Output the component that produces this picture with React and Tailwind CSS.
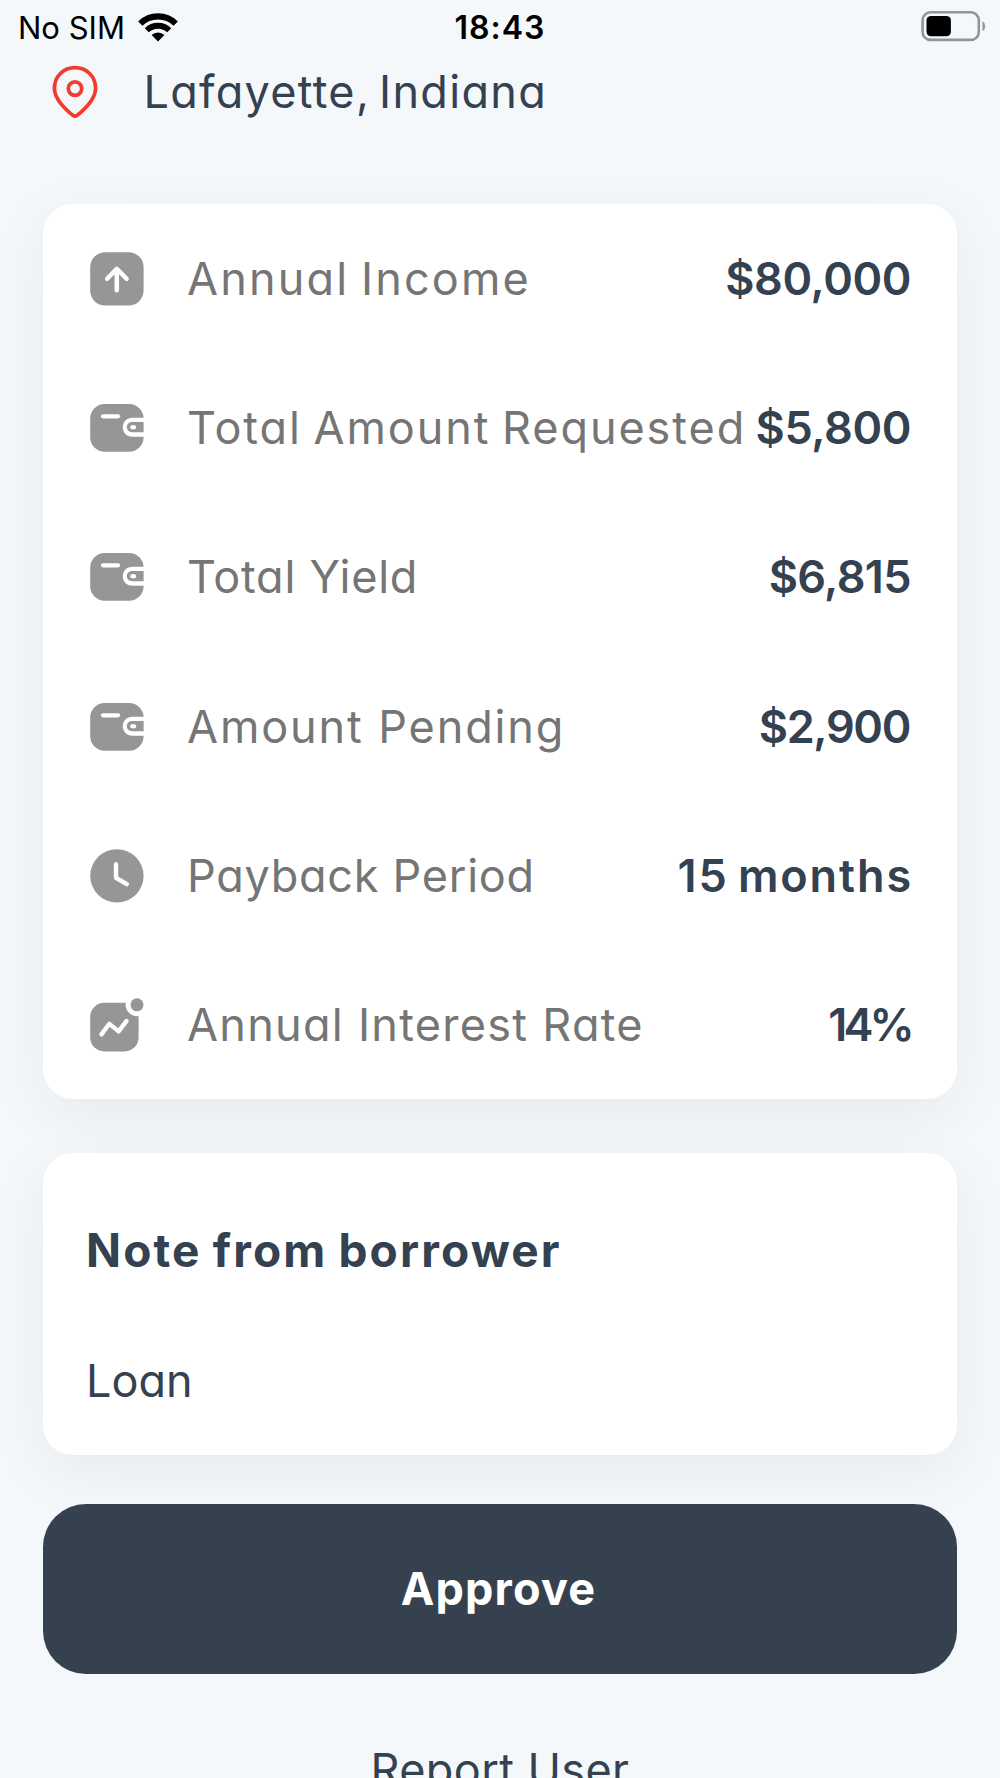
import clsx from 'clsx';

function PinIcon() {
  return (
    <svg width="46" height="54" viewBox="0 0 46 54" fill="none" stroke="#f4392f" strokeWidth="3.7">
      <path
        d="M23 51.2C21.5 51.2 19.6 49.4 17.8 47.8C9.6 40.6 2.4 32.8 2.4 23.2C2.4 11.4 11.6 2.7 23 2.7S43.6 11.4 43.6 23.2C43.6 32.8 36.4 40.6 28.2 47.8C26.4 49.4 24.5 51.2 23 51.2Z"
        strokeLinejoin="round"
      />
      <circle cx="23" cy="23.6" r="6.7" />
    </svg>
  );
}

function WifiIcon() {
  return (
    <svg width="40" height="30" viewBox="0 0 40 30" fill="none" stroke="#000">
      <path d="M2.3 11.6A25.3 25.3 0 0 1 37.7 11.6" strokeWidth="6.2" />
      <path d="M8.8 18.3A16 16 0 0 1 31.2 18.3" strokeWidth="5.8" />
      <path d="M20 29.4L13.6 23A9.4 9.4 0 0 1 26.4 23Z" fill="#000" stroke="none" />
    </svg>
  );
}

function BatteryIcon() {
  return (
    <svg width="66" height="32" viewBox="0 0 66 32">
      <rect x="2.6" y="2.3" width="56.2" height="27.6" rx="8" fill="none" stroke="#929496" strokeWidth="2.6" />
      <rect x="6.5" y="6" width="24.4" height="20.2" rx="4.5" fill="#000" />
      <path d="M62.5 11.2C66 13 66 19.4 62.5 21.2Z" fill="#929496" />
    </svg>
  );
}

function IncomeIcon() {
  return (
    <svg width="54" height="54" viewBox="0 0 54 54" fill="none">
      <rect x="0.2" y="0.2" width="53.4" height="53.4" rx="15" fill="#969696" />
      <path
        d="M26.8 38.2V17M17.2 26.8L26.8 16.8L36.6 26.8"
        stroke="#fff"
        strokeWidth="4.5"
        strokeLinecap="round"
        strokeLinejoin="round"
      />
    </svg>
  );
}

function WalletIcon() {
  return (
    <svg width="54" height="48" viewBox="0 0 54 48" fill="none">
      <rect x="0.2" y="0" width="53.4" height="47.8" rx="14.5" fill="#969696" />
      <path d="M13 12.3H28" stroke="#fff" strokeWidth="4.2" strokeLinecap="round" />
      <path d="M54 13.8H42.4C36.8 13.8 32.8 17.8 32.8 23.2S36.8 32.7 42.4 32.7H54Z" fill="#fff" />
      <path d="M53.6 18H42.4C39 18 36.8 20.2 36.8 23.1S39 28.2 42.4 28.2H53.6Z" fill="#969696" />
      <ellipse cx="43.2" cy="23.2" rx="2.9" ry="2.2" fill="#fff" />
    </svg>
  );
}

function ClockIcon() {
  return (
    <svg width="54" height="54" viewBox="0 0 54 54" fill="none">
      <circle cx="26.9" cy="26.9" r="26.7" fill="#969696" />
      <path d="M26 15.2V28.8L36.8 35.2" stroke="#fff" strokeWidth="4.4" strokeLinecap="round" strokeLinejoin="round" />
    </svg>
  );
}

function RateIcon() {
  return (
    <svg width="54" height="54" viewBox="0 0 54 54" fill="none">
      <rect x="0.2" y="4.8" width="48.4" height="48.6" rx="14" fill="#969696" />
      <circle cx="47" cy="6.8" r="11.4" fill="#fff" />
      <circle cx="47" cy="6.8" r="6.5" fill="#969696" />
      <path
        d="M11.4 36.4L19.4 25.8L28.6 33.4L36.6 22.9"
        stroke="#fff"
        strokeWidth="4.3"
        strokeLinecap="round"
        strokeLinejoin="round"
      />
    </svg>
  );
}

const details = [
  {
    label: 'Annual Income',
    value: '$80,000',
    icon: IncomeIcon,
    labelClass: 'tracking-[2.15px] [word-spacing:-3px]',
    valueClass: 'tracking-[-0.4px]',
  },
  {
    label: 'Total Amount Requested',
    value: '$5,800',
    icon: WalletIcon,
    labelClass: 'tracking-[1.93px] [word-spacing:-3px]',
    valueClass: 'tracking-[-0.4px]',
  },
  {
    label: 'Total Yield',
    value: '$6,815',
    icon: WalletIcon,
    labelClass: 'tracking-[0.76px]',
    valueClass: 'tracking-[-0.6px]',
  },
  {
    label: 'Amount Pending',
    value: '$2,900',
    icon: WalletIcon,
    labelClass: 'tracking-[1.88px]',
    valueClass: 'mr-px tracking-[-1.35px]',
  },
  {
    label: 'Payback Period',
    value: '15 months',
    icon: ClockIcon,
    labelClass: 'tracking-[0.73px]',
    valueClass: '-mr-[2px] tracking-[1.9px] [word-spacing:-4px]',
  },
  {
    label: 'Annual Interest Rate',
    value: '14%',
    icon: RateIcon,
    labelClass: 'tracking-[1.29px]',
    valueClass: 'tracking-[-3.8px]',
  },
];

function DetailRow({ item }) {
  const Icon = item.icon;

  return (
    <div className="flex items-center">
      <div className="w-[97px] shrink-0 pt-px">
        <Icon />
      </div>
      <span className={clsx('text-[45px] text-[#757575]', item.labelClass)}>{item.label}</span>
      <span className={clsx('ml-auto text-[45px] font-semibold', item.valueClass)}>{item.value}</span>
    </div>
  );
}

function App() {
  return (
    <div className="flex h-[1778px] w-[1000px] flex-col overflow-hidden bg-[#f4f8fb] font-['Inter',sans-serif] leading-none whitespace-nowrap text-[#334150] [font-feature-settings:'cv11']">
      <header className="grid h-[54px] shrink-0 grid-cols-3 items-center px-[18px] text-black [font-feature-settings:normal]">
        <div className="flex items-center gap-[13px]">
          <span className="pt-px text-[31px]">No SIM</span>
          <WifiIcon />
        </div>
        <span className="pt-[2px] text-center text-[32px] font-semibold tracking-[1px]">18:43</span>
        <div className="-mr-[4px] mb-[2px] ml-auto">
          <BatteryIcon />
        </div>
      </header>

      <div className="flex h-[76px] shrink-0 items-center pl-[51.5px]">
        <PinIcon />
        <span className="ml-[46px] pb-px text-[45px] tracking-[1.3px] [word-spacing:-5px]">Lafayette, Indiana</span>
      </div>

      <section className="mx-[43px] mt-[74px] grid h-[895px] shrink-0 grid-rows-6 rounded-[30px] bg-white pr-[46px] pl-[47px] shadow-[0_16px_60px_rgba(0,0,0,0.06)]">
        {details.map((item) => (
          <DetailRow key={item.label} item={item} />
        ))}
      </section>

      <section className="mx-[43px] mt-[54px] h-[302px] shrink-0 rounded-[30px] bg-white px-[43px] pt-[74px] shadow-[0_16px_60px_rgba(0,0,0,0.06)]">
        <h2 className="text-[46px] font-bold tracking-[2.15px] [word-spacing:-2px]">Note from borrower</h2>
        <p className="mt-[85px] text-[45px]">Loan</p>
      </section>

      <button className="z-10 mx-[43px] mt-[48.5px] h-[170px] shrink-0 rounded-[43px] bg-[#36414f] pr-[3px] pb-px text-[45px] font-bold tracking-[1.2px] text-white">
        Approve
      </button>

      <button className="mt-[73px] shrink-0 text-[45px] tracking-[0.4px]">Report User</button>
    </div>
  );
}

export default App;
